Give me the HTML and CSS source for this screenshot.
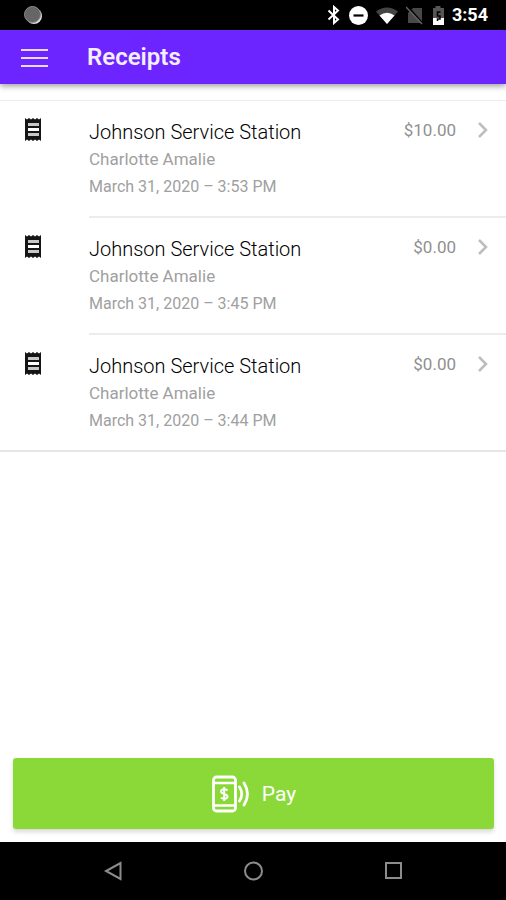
FILE: index.html
```html
<!DOCTYPE html>
<html lang="en">
<head>
<meta charset="utf-8">
<meta name="viewport" content="width=device-width, initial-scale=1">
<title>Receipts</title>
<link rel="stylesheet" href="styles.css">
</head>
<body>
<svg class="sprite" aria-hidden="true">
  <symbol id="receipt" viewBox="0 0 18 24">
    <path fill="#151515" d="M1 0l2 1.500L5 0l2 1.500L9 0l2 1.500L13 0l2 1.500L17 0v23l-2-1.500-2 1.500-2-1.500-2 1.500-2-1.500-2 1.500-2-1.500-2 1.500z"/>
    <path fill="#c8c8c8" d="M4 5h11v3H4zM4 15h11v3H4z"/>
    <path fill="#fff" d="M4 10h11v3H4z"/>
  </symbol>
  <symbol id="chevron" viewBox="0 0 12 18">
    <path d="M1 2l7 7-7 7" fill="none" stroke="#bdbdbd" stroke-width="2.500"/>
  </symbol>
</svg>
<div class="status">
  <svg class="sync" width="20" height="20" viewBox="0 0 20 20" aria-hidden="true"><circle cx="11" cy="11" r="8" fill="#ddd"/><circle cx="9.500" cy="9.500" r="8" fill="#666" stroke="#8a8a8a"/></svg>
  <div class="indicators">
    <svg width="14" height="20" viewBox="0 0 14 20" aria-hidden="true"><path d="M2.500 5.500l9.500 9L8 18V2l4 3.500-9.500 9" fill="none" stroke="#fff" stroke-width="2"/></svg>
    <svg width="20" height="20" viewBox="0 0 20 20" aria-hidden="true"><circle cx="10.500" cy="10.500" r="9.500" fill="#fff"/><path d="M5.500 10.500h10" stroke="#000" stroke-width="2.200"/></svg>
    <svg width="22" height="20" viewBox="0 0 22 20" aria-hidden="true"><path d="M0 6.500Q11-1.500 22 6.500L11 19z" fill="#444"/><path d="M3.500 10.500Q11 5 18.500 10.500L11 19z" fill="#fff"/></svg>
    <svg width="18" height="20" viewBox="0 0 18 20" aria-hidden="true"><path d="M7 3h9v15H2V8z" fill="#484848"/><path d="M1 1l16 18" stroke="#000" stroke-width="2"/><path d="M0 2l16 17" stroke="#666" stroke-width="1.500"/></svg>
    <svg width="12" height="20" viewBox="0 0 12 20" aria-hidden="true"><path d="M3.500 1h5v2H12v16H1V3h2.500z" fill="#555"/><path d="M1 13h11v7H1z" fill="#fff"/><path d="M8.500 7H5.500v4H8v3H5.500v2" fill="none" stroke="#000" stroke-width="1.500"/></svg>
    <span class="clock">3:54</span>
  </div>
</div>
<header class="bar">
  <button class="menu" type="button" aria-label="Menu"><svg width="28" height="20" viewBox="0 0 28 20"><path d="M1 3h27M1 11h27M1 19h27" stroke="#e6dbff" stroke-width="2"/></svg></button>
  <h1>Receipts</h1>
</header>
<main>
  <ul class="list">
    <li><a class="row" href="#">
      <svg class="mark"><use href="#receipt"/></svg>
      <div class="body">
        <div class="text"><h2>Johnson Service Station</h2><p>Charlotte Amalie</p><p class="date">March 31, 2020 – 3:53 PM</p></div>
        <span class="amount">$10.00</span><svg class="go"><use href="#chevron"/></svg>
      </div></a></li>
    <li><a class="row" href="#">
      <svg class="mark"><use href="#receipt"/></svg>
      <div class="body">
        <div class="text"><h2>Johnson Service Station</h2><p>Charlotte Amalie</p><p class="date">March 31, 2020 – 3:45 PM</p></div>
        <span class="amount">$0.00</span><svg class="go"><use href="#chevron"/></svg>
      </div></a></li>
    <li><a class="row" href="#">
      <svg class="mark"><use href="#receipt"/></svg>
      <div class="body">
        <div class="text"><h2>Johnson Service Station</h2><p>Charlotte Amalie</p><p class="date">March 31, 2020 – 3:44 PM</p></div>
        <span class="amount">$0.00</span><svg class="go"><use href="#chevron"/></svg>
      </div></a></li>
  </ul>
</main>
<div class="action">
  <button class="pay" type="button">
    <svg width="40" height="38" viewBox="0 0 40 38" fill="none" stroke="#fff" aria-hidden="true">
      <rect x="2.500" y="2" width="22" height="34" rx="3" stroke-width="2.800"/>
      <path d="M2 8h22M2 30.500h22" stroke-width="2.500"/>
      <path d="M16.500 15.500C15.500 14 10 13.500 10 16.500s6.500 2 6.500 5-5.500 2.500-6.500 1M13.200 12v14" stroke-width="2"/>
      <path d="M28.500 12q4.500 7 0 14M33 8q7 11 0 22" stroke-width="2.800" stroke-linecap="round"/>
    </svg>
    <span>Pay</span>
  </button>
</div>
<nav class="nav" aria-label="System">
  <button type="button" aria-label="Back"><svg width="20" height="20" viewBox="0 0 20 20"><path d="M17.500 2v16L3 10z"/></svg></button>
  <button type="button" aria-label="Home"><svg width="20" height="20" viewBox="0 0 20 20"><circle cx="10.500" cy="10" r="8.500"/></svg></button>
  <button type="button" aria-label="Recent apps"><svg width="20" height="20" viewBox="0 0 20 20"><rect x="3" y="2" width="15" height="15"/></svg></button>
</nav>
</body>
</html>
```
FILE: styles.css
```css
* { box-sizing: border-box; }
body {
  margin: 0;
  min-height: 100vh;
  display: flex;
  flex-direction: column;
  background: #fff;
  font-family: Roboto, "Liberation Sans", sans-serif;
}
button { border: 0; padding: 0; background: none; font: inherit; color: inherit; }
svg { display: block; flex: none; }
h1, h2, p, ul { margin: 0; padding: 0; }
.sprite { position: absolute; width: 0; height: 0; }

.status {
  display: flex;
  align-items: center;
  justify-content: space-between;
  height: 30px;
  padding: 0 18px 0 23px;
  background: #000;
  color: #fff;
}
.indicators { display: flex; align-items: center; gap: 8px; }
.clock { font-size: 18px; font-weight: 700; line-height: 20px; }

.bar {
  display: flex;
  align-items: center;
  gap: 39px;
  height: 54px;
  padding: 0 20px;
  background: #6d25ff;
  color: #f4efff;
  box-shadow: 0 2px 6px rgba(0, 0, 0, .4);
}
.bar h1 { font-size: 24px; font-weight: 600; line-height: 28px; }

main { flex: 1; padding-top: 16px; }
.list {
  list-style: none;
  border-top: 1px solid #ececec;
  border-bottom: 2px solid #e6e6e6;
}
.row { display: flex; color: inherit; text-decoration: none; }
.mark { width: 18px; height: 24px; margin: 17px 47px 0 24px; }
.body {
  flex: 1;
  display: flex;
  padding: 17px 16px 16px 0;
  border-bottom: 2px solid #ececec;
}
li:last-child .body { border-bottom: 0; }
.text { flex: 1; }
h2 { font-size: 20px; font-weight: 300; line-height: 28px; color: #000; }
p { font-size: 17px; line-height: 27px; color: #a0a0a0; }
.date { font-size: 16px; }
.amount { font-size: 17px; line-height: 24px; color: #909090; }
.go { width: 12px; height: 18px; margin: 3px 0 0 22px; }

.action { padding: 0 12px 13px 13px; }
.pay {
  display: flex;
  align-items: center;
  justify-content: center;
  gap: 11px;
  width: 100%;
  height: 71px;
  border-radius: 3px;
  background: #8bd938;
  box-shadow: 0 3px 4px rgba(0, 0, 0, .15);
  color: #fff;
  font-size: 21px;
}

.nav {
  display: flex;
  align-items: center;
  justify-content: space-around;
  height: 58px;
  padding: 0 43px;
  background: #000;
}
.nav svg { fill: none; stroke: #8c8c8c; stroke-width: 2; }
```
